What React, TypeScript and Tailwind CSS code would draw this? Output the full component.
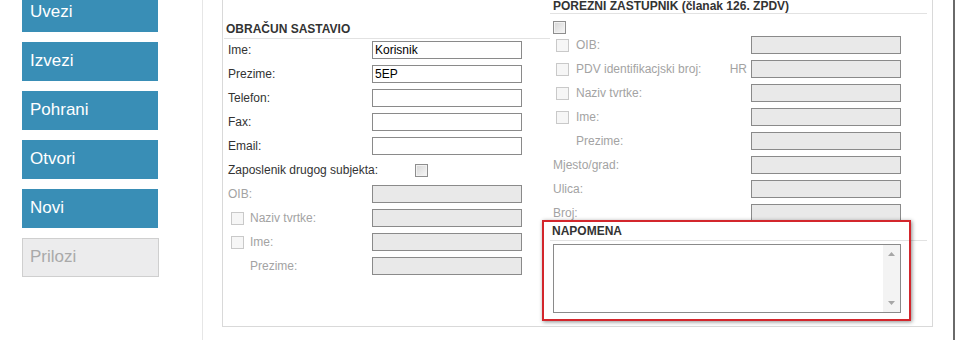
const font = "font-['Liberation_Sans',Arial,sans-serif]";

function SideButton({ label, disabled }: { label: string; disabled?: boolean }) {
  if (disabled)
    return (
      <div className="flex h-[39px] w-[137px] items-center border border-[#cfcfcf] bg-[#ececed] pl-[7px] pb-[1px] text-[17px] text-[#a9a9a9]">
        {label}
      </div>
    );
  return (
    <div className="flex h-[39px] w-[136px] items-center bg-[#398eb6] pl-[8px] pb-[1px] text-[17px] text-white">
      {label}
    </div>
  );
}

function Field({ value, disabled }: { value?: string; disabled?: boolean }) {
  return (
    <div
      className={`h-[18px] w-[150px] shrink-0 border border-[#8a8a8a] pl-[2px] text-[12px] leading-[16px] text-black ${
        disabled ? "bg-[#e9e9e9]" : "bg-white"
      }`}
    >
      {value}
    </div>
  );
}

function Check({ disabled }: { disabled?: boolean }) {
  if (disabled) return <div className="h-[13px] w-[13px] shrink-0 border border-[#c9c9c9] bg-[#f6f6f6]" />;
  return (
    <div className="h-[13px] w-[13px] shrink-0 border border-[#8e8e8e] bg-linear-to-br from-[#d6d6d6] to-[#f7f7f7] shadow-[inset_0_0_0_1px_#f2f2f2]" />
  );
}

function Header({ text, className }: { text: string; className: string }) {
  return (
    <div className={`border-b border-[#e2e2e2] text-[12px] font-bold leading-[14px] text-[#333] ${className}`}>
      {text}
    </div>
  );
}

function LeftRow({ label, value, disabled, indent }: { label: string; value?: string; disabled?: boolean; indent?: boolean }) {
  return (
    <div className="flex h-[18px] items-center">
      <span className={`w-[144px] ${disabled ? "text-[#a3a3a3]" : "text-[#333]"} ${indent ? "pl-[22px]" : ""}`}>
        {label}
      </span>
      <Field value={value} disabled={disabled} />
    </div>
  );
}

function CheckRow({ label, width, gap }: { label: string; width: string; gap: string }) {
  return (
    <div className="flex h-[18px] items-center">
      <div className={`flex items-center pl-[3px] ${width}`}>
        <Check disabled />
        <span className={`${gap} text-[#a3a3a3]`}>{label}</span>
      </div>
      <Field disabled />
    </div>
  );
}

function RightRow({ label, indent }: { label: string; indent?: boolean }) {
  return (
    <div className="flex h-[18px] items-center">
      <span className={`w-[198px] text-[#a3a3a3] ${indent ? "pl-[23px]" : ""}`}>{label}</span>
      <Field disabled />
    </div>
  );
}

export default function App() {
  return (
    <div className={`relative flex h-[340px] w-[958px] overflow-hidden bg-white text-[12px] leading-[18px] ${font}`}>
      <div className="h-full w-[203px] shrink-0 border-r border-[#e6e6e6]">
        <div className="ml-[22px] mt-[-7px] flex flex-col gap-[10px]">
          <SideButton label="Uvezi" />
          <SideButton label="Izvezi" />
          <SideButton label="Pohrani" />
          <SideButton label="Otvori" />
          <SideButton label="Novi" />
          <SideButton label="Prilozi" disabled />
        </div>
      </div>

      <div className="w-[19px] shrink-0" />

      <div className="flex h-[327px] w-[711px] shrink-0 items-start border-x border-b border-[#d9d9d9] pl-[1px] pr-[5px]">
        {/* lijevi stupac */}
        <div className="w-[326px] shrink-0">
          <Header text="OBRAČUN SASTAVIO" className="mt-[22px] h-[17px] pl-[2px]" />
          <div className="mt-[2px] flex flex-col gap-[6px] pl-[4px]">
            <LeftRow label="Ime:" value="Korisnik" />
            <LeftRow label="Prezime:" value="5EP" />
            <LeftRow label="Telefon:" />
            <LeftRow label="Fax:" />
            <LeftRow label="Email:" />
            <div className="flex h-[18px] items-center">
              <span className="w-[187px] text-[#333]">Zaposlenik drugog subjekta:</span>
              <Check />
            </div>
            <LeftRow label="OIB:" disabled />
            <CheckRow label="Naziv tvrtke:" width="w-[144px]" gap="ml-[6px]" />
            <CheckRow label="Ime:" width="w-[144px]" gap="ml-[6px]" />
            <LeftRow label="Prezime:" disabled indent />
          </div>
        </div>

        {/* desni stupac */}
        <div className="w-[377px] shrink-0">
          <Header text="POREZNI ZASTUPNIK (članak 126. ZPDV)" className="mt-[-1px] h-[15px] pl-[3px]" />
          <div className="pl-[3px]">
            <div className="mt-[7px]">
              <Check />
            </div>
            <div className="mt-[2px] flex flex-col gap-[6px]">
              <CheckRow label="OIB:" width="w-[198px]" gap="ml-[7px]" />
              <div className="flex h-[18px] items-center">
                <div className="flex w-[198px] items-center justify-between pl-[3px] pr-[4px]">
                  <div className="flex items-center">
                    <Check disabled />
                    <span className="ml-[7px] text-[#a3a3a3]">PDV identifikacjski broj:</span>
                  </div>
                  <span className="text-[#a3a3a3]">HR</span>
                </div>
                <Field disabled />
              </div>
              <CheckRow label="Naziv tvrtke:" width="w-[198px]" gap="ml-[7px]" />
              <CheckRow label="Ime:" width="w-[198px]" gap="ml-[7px]" />
              <RightRow label="Prezime:" indent />
              <RightRow label="Mjesto/grad:" />
              <RightRow label="Ulica:" />
              <RightRow label="Broj:" />
            </div>
          </div>
          <Header text="NAPOMENA" className="mt-[2px] h-[17px] pl-[2px]" />
          <div className="ml-[3px] mt-[3px] flex h-[69px] w-[348px] border border-[#8a8a8a] bg-white">
            <div className="flex-1" />
            <div className="flex w-[17px] flex-col items-center justify-between bg-[#f3f3f3] py-[7px]">
              <svg width="7" height="4" viewBox="0 0 7 4">
                <polygon points="3.5,0 7,4 0,4" fill="#a6a6a6" />
              </svg>
              <svg width="7" height="4" viewBox="0 0 7 4">
                <polygon points="0,0 7,0 3.5,4" fill="#a6a6a6" />
              </svg>
            </div>
          </div>
        </div>
      </div>

      <div className="w-[20px] shrink-0" />
      <div className="h-full w-[2px] shrink-0 bg-[#6a6a6a]" />

      <div className="absolute left-[542px] top-[220px] h-[101px] w-[369px] border-2 border-[#d3262c] shadow-[1px_1px_4px_rgba(0,0,0,0.45)]" />
    </div>
  );
}
